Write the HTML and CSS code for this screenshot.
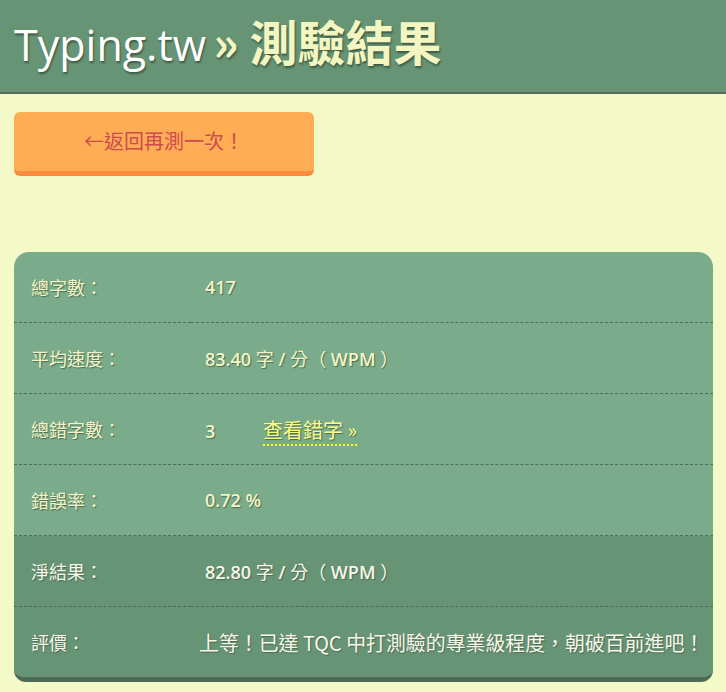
FILE: index.html
```html
<!DOCTYPE html>
<html lang="zh-Hant">

<head>
  <meta charset="UTF-8">
  <meta name="viewport" content="width=device-width, initial-scale=1.0">
  <title>Typing.tw » 測驗結果</title>
  <link rel="stylesheet" href="styles.css">
</head>

<body>
  <header class="top">
    <h1><span class="site">Typing.tw</span> <span class="page">» 測驗結果</span></h1>
  </header>

  <main class="content">
    <a class="btn-back" href="#">←返回再測一次！</a>

    <table class="result">
      <colgroup>
        <col class="col-label">
        <col>
      </colgroup>
      <tr>
        <th>總字數：</th>
        <td>417</td>
      </tr>
      <tr>
        <th>平均速度：</th>
        <td>83.40 <span class="unit">字</span> / <span class="unit">分（</span> WPM <span class="unit">）</span></td>
      </tr>
      <tr>
        <th>總錯字數：</th>
        <td><span class="err-count">3</span><a class="err-link" href="#">查看錯字 »</a></td>
      </tr>
      <tr>
        <th>錯誤率：</th>
        <td>0.72 %</td>
      </tr>
      <tr class="net">
        <th>淨結果：</th>
        <td>82.80 <span class="unit">字</span> / <span class="unit">分（</span> WPM <span class="unit">）</span></td>
      </tr>
      <tr class="net last">
        <th>評價：</th>
        <td class="comment">上等！已達 TQC 中打測驗的專業級程度，朝破百前進吧！</td>
      </tr>
    </table>
  </main>
</body>

</html>
```

FILE: styles.css
```css
body {
  margin: 0;
  background-color: #f4f9c8;
  font-family: "Noto Sans CJK TC", "Noto Sans", sans-serif;
}
.top {
  background-color: #679474;
  border-bottom: 2px solid #5a6e5c;
  height: 92px;
  padding: 0 14px;
}
.top h1 {
  margin: 0;
  line-height: 80px;
  font-weight: normal;
  text-shadow: 1px 2px 2px #3d5a45;
}
.site {
  font-family: "Open Sans", sans-serif;
  font-size: 43px;
  color: #ffffff;
}
.page {
  color: #f4f6c2;
  font-size: 48px;
  font-weight: bold;
}
.content {
  padding: 18px 13px 0 14px;
}
.btn-back {
  display: block;
  width: 300px;
  height: 59px;
  line-height: 58px;
  text-align: center;
  background-color: #ffad55;
  border-bottom: 5px solid #fb8a3f;
  border-radius: 6px;
  color: #cc4b4e;
  font-size: 20px;
  text-decoration: none;
}
.result {
  margin-top: 76px;
  width: 699px;
  table-layout: fixed;
  border-collapse: separate;
  border-spacing: 0;
  background-color: #7aac8b;
  border-radius: 15px 15px 12px 12px;
  border-bottom: 5px solid #4e6b55;
  overflow: hidden;
  color: #f4f5c6;
  text-shadow: 1px 1px 1px #4a6b54;
}
.col-label {
  width: 177px;
}
.result th,
.result td {
  height: 70px;
  padding: 0;
  border-bottom: 1px dashed #4f6e58;
  text-align: left;
  vertical-align: middle;
  white-space: nowrap;
}
.result th {
  padding-left: 17px;
  font-size: 18px;
  font-weight: normal;
}
.result td {
  padding-left: 14px;
  font-family: "Open Sans", "Noto Sans CJK TC", sans-serif;
  font-size: 18px;
  font-weight: 600;
}
.unit {
  font-family: "Noto Sans CJK TC", sans-serif;
  font-size: 18px;
  font-weight: normal;
}
.err-count {
  display: inline-block;
  width: 58px;
}
.err-link {
  color: #fdfd8c;
  font-family: "Noto Sans CJK TC", sans-serif;
  font-size: 20px;
  font-weight: normal;
  text-decoration: none;
  border-bottom: 2px dotted #ffff00;
}
.net th,
.net td {
  background-color: #679474;
  color: #f7f7ea;
}
.last th,
.last td {
  border-bottom: none;
}
.result .comment {
  padding-left: 8px;
  font-family: "Noto Sans CJK TC", sans-serif;
  font-size: 19.9px;
  font-weight: normal;
}
```
